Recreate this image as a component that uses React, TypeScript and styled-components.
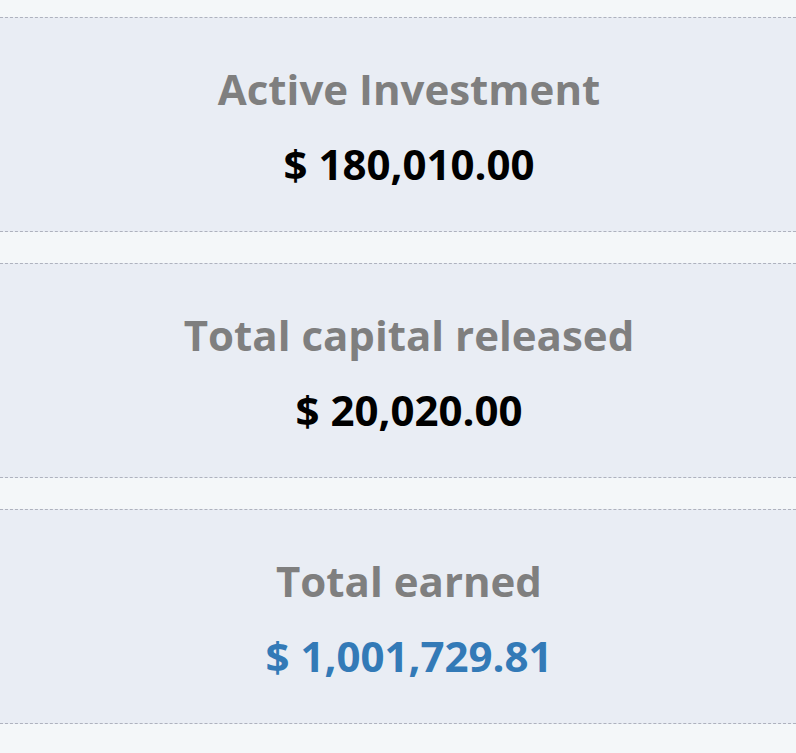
import React from "react";
import styled, { createGlobalStyle } from "styled-components";

const Global = createGlobalStyle`
  html, body { margin: 0; padding: 0; background: #f4f7f9; }
  body { font-family: "Open Sans", "Liberation Sans", sans-serif; }
`;

const Page = styled.div`
  display: flex;
  flex-direction: column;
  gap: 31px;
  padding: 17px 0 29px;
`;

const Card = styled.section`
  background: #e9edf4;
  border-top: 1px dashed #aeb2be;
  border-bottom: 1px dashed #aeb2be;
  padding: 46px 16px 42px 38px;
  display: flex;
  flex-direction: column;
  align-items: center;
  gap: 25px;
  text-align: center;
`;

const Title = styled.h3`
  margin: 0;
  font-size: 42px;
  line-height: 50px;
  font-weight: 700;
  color: #7f7f7f;
`;

const Value = styled.div<{ $accent?: boolean }>`
  font-size: 42px;
  line-height: 50px;
  font-weight: 700;
  color: ${(p) => (p.$accent ? "#337ab7" : "#000000")};
`;

const items = [
  { title: "Active Investment", value: "$ 180,010.00" },
  { title: "Total capital released", value: "$ 20,020.00" },
  { title: "Total earned", value: "$ 1,001,729.81", accent: true },
];

export default function App() {
  return (
    <>
      <Global />
      <Page>
        {items.map((it) => (
          <Card key={it.title}>
            <Title>{it.title}</Title>
            <Value $accent={it.accent}>{it.value}</Value>
          </Card>
        ))}
      </Page>
    </>
  );
}
